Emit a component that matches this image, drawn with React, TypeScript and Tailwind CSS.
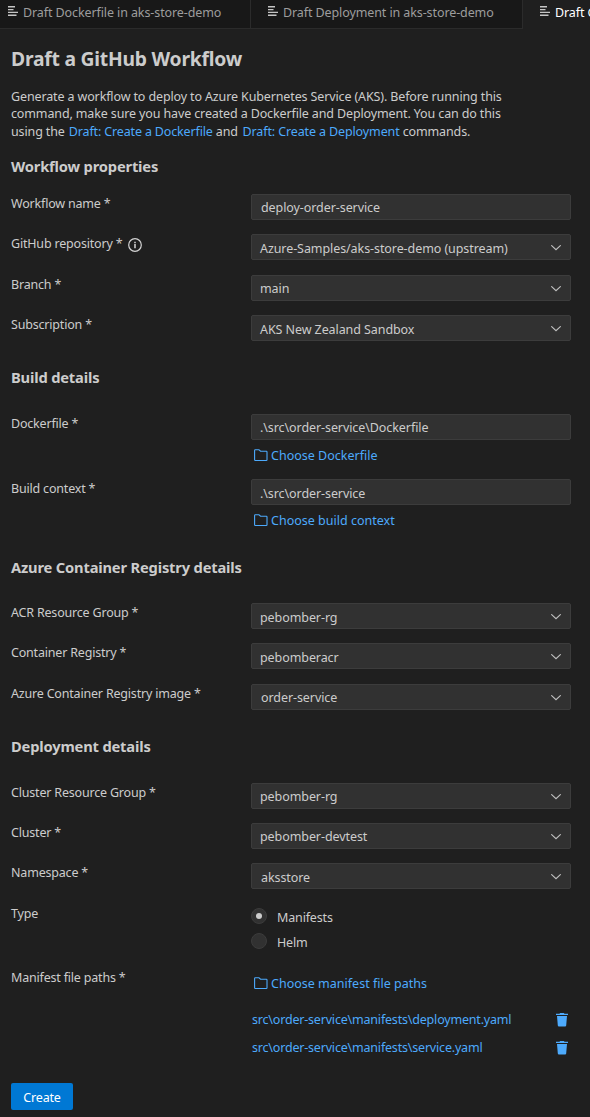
import type { ReactNode } from 'react'

function LinesIcon() {
  return (
    <svg width="10" height="11" viewBox="0 0 10 11" fill="none" stroke="#c5c5c5" strokeWidth="1.4" className="mt-[6px] shrink-0">
      <path d="M0 .7h7M0 3.6h5.5M0 6.4h10M0 9.3h8.5" />
    </svg>
  )
}

function FolderIcon() {
  return (
    <svg width="14" height="13" viewBox="0 0 14 13" fill="none" stroke="currentColor" strokeWidth="1.1" strokeLinejoin="round" className="mt-[2px] shrink-0">
      <path d="M1.3.7h3.3q.4 0 .7.3l1.4 1.3h5.6q.7 0 .7.7v7.8q0 .7-.7.7H1.3q-.7 0-.7-.7V1.4q0-.7.7-.7z" />
    </svg>
  )
}

function TrashIcon() {
  return (
    <svg width="12" height="14" viewBox="0 0 12 14" fill="currentColor" className="mt-[2px] shrink-0">
      <path d="M3.8 0h4.4v.7H12v1.4H0V.7h3.8zM1 3h10l-.8 9.4q-.1 1-1.1 1H2.9q-1 0-1.1-1z" />
    </svg>
  )
}

function InfoIcon() {
  return (
    <svg width="14" height="14" viewBox="0 0 14 14" fill="none" className="ml-[6px] mt-[3px] shrink-0">
      <circle cx="7" cy="7" r="6.3" stroke="#d4d4d4" strokeWidth="1.2" />
      <path d="M7 6v4.2" stroke="#e4e4e4" strokeWidth="1.4" />
      <path d="M7 3.8v1.4" stroke="#e4e4e4" strokeWidth="1.4" />
    </svg>
  )
}

function Chevron() {
  return (
    <svg width="10" height="6" viewBox="0 0 10 6" fill="none" stroke="#c0c0c0" strokeWidth="1.1" className="mr-[9px] mt-[10px] shrink-0">
      <path d="M.3.3 5 4.7 9.7.3" />
    </svg>
  )
}

function Tab({ title, className }: { title: string; className: string }) {
  return (
    <div className={`flex shrink-0 gap-[5px] overflow-hidden ${className}`}>
      <LinesIcon />
      <span className="pt-[4px]">{title}</span>
    </div>
  )
}

function Heading({ children, className }: { children: ReactNode; className: string }) {
  return <h2 className={`h-5 shrink-0 text-[14.7px] leading-5 font-bold tracking-[-0.17px] ${className}`}>{children}</h2>
}

function Row({ label, info, className = 'h-10', children }: { label: string; info?: boolean; className?: string; children: ReactNode }) {
  return (
    <div className={`flex shrink-0 ${className}`}>
      <div className="flex w-[240px] shrink-0 pt-px tracking-[-0.19px]">
        <span>{label}</span>
        {info && <InfoIcon />}
      </div>
      <div className="flex w-80 flex-col">{children}</div>
    </div>
  )
}

function Field({ value, select, className = 'pt-[4px]' }: { value: string; select?: boolean; className?: string }) {
  return (
    <div className="flex h-[26px] shrink-0 justify-between rounded-[2px] border border-[#3c3c3c] bg-[#313131]">
      <span className={`tracking-[-0.08px] ${className}`}>{value}</span>
      {select && <Chevron />}
    </div>
  )
}

function Choose({ children, className = 'mt-[7px]' }: { children: string; className?: string }) {
  return (
    <a className={`flex gap-[3px] pl-[3px] tracking-[0.01px] text-[#4daafc] ${className}`}>
      <FolderIcon />
      {children}
    </a>
  )
}

function Radio({ label, checked }: { label: string; checked?: boolean }) {
  return (
    <label className="flex h-[25px] gap-[10px]">
      <span className="flex size-4 items-center justify-center rounded-full border border-[#3c3c3c] bg-[#313131]">
        {checked && <span className="size-[6px] rounded-full bg-[#cccccc]" />}
      </span>
      <span className="pt-px">{label}</span>
    </label>
  )
}

function ManifestPath({ path }: { path: string }) {
  return (
    <div className="flex h-7 justify-between pr-[3px] pl-px tracking-[-0.19px] text-[#4daafc]">
      <a>{path}</a>
      <TrashIcon />
    </div>
  )
}

export default function App() {
  return (
    <div className="flex h-[1117px] w-[590px] flex-col overflow-hidden bg-[#1f1f1f] font-['Noto_Sans','Open_Sans',sans-serif] text-[12.5px] leading-[18px] tracking-[-0.15px] whitespace-nowrap text-[#cccccc]">
      <div className="flex h-[29px] shrink-0 tracking-[-0.1px]">
        <Tab title="Draft Dockerfile in aks-store-demo" className="w-[251px] border-r border-b border-[#2b2b2b] bg-[#181818] pl-[8px] text-[#9d9d9d]" />
        <Tab title="Draft Deployment in aks-store-demo" className="w-[272px] border-r border-b border-[#2b2b2b] bg-[#181818] pl-[17px] text-[#9d9d9d]" />
        <Tab title="Draft GitHub Workflow" className="w-[67px] pl-[17px] text-white" />
      </div>

      <main className="flex flex-col pl-[11px]">
        <h1 className="mt-[17px] h-[26px] text-[19.3px] leading-[26px] font-bold tracking-[-0.22px]">Draft a GitHub Workflow</h1>
        <p className="mt-[16px] flex h-[52px] flex-col tracking-[-0.13px]">
          <span className="h-[17px]">Generate a workflow to deploy to Azure Kubernetes Service (AKS). Before running this</span>
          <span className="h-[18px]">command, make sure you have created a Dockerfile and Deployment. You can do this</span>
          <span>
            using the <a className="pl-px tracking-[-0.15px] text-[#4daafc]">Draft: Create a Dockerfile</a> and{' '}
            <a className="pl-[1.5px] tracking-[-0.12px] text-[#4daafc]">Draft: Create a Deployment</a> commands.
          </span>
        </p>

        <Heading className="mt-[16px] mb-[18px]">Workflow properties</Heading>
        <Row label="Workflow name *"><Field value="deploy-order-service" className="pt-[4px] pl-[9px]" /></Row>
        <Row label="GitHub repository *" info className="h-[41px]"><Field select value="Azure-Samples/aks-store-demo (upstream)" className="pt-[5px] pl-[8px]" /></Row>
        <Row label="Branch *"><Field select value="main" className="pt-[4px] pl-[8px]" /></Row>
        <Row label="Subscription *" className="h-[26px]"><Field select value="AKS New Zealand Sandbox" className="pt-[5px] pl-[8px]" /></Row>

        <Heading className="mt-[26px] mb-[27px]">Build details</Heading>
        <Row label="Dockerfile *" className="h-[65px]">
          <Field value=".\src\order-service\Dockerfile" className="pt-[4px] pl-[8px]" />
          <Choose>Choose Dockerfile</Choose>
        </Row>
        <Row label="Build context *" className="h-[50px]">
          <Field value=".\src\order-service" className="pt-[5px] pl-[8px]" />
          <Choose>Choose build context</Choose>
        </Row>

        <Heading className="mt-[28px] mb-[26px]">Azure Container Registry details</Heading>
        <Row label="ACR Resource Group *"><Field select value="pebomber-rg" className="pt-[5px] pl-[8px]" /></Row>
        <Row label="Container Registry *" className="h-[41px]"><Field select value="pebomberacr" className="pt-[5px] pl-[8px]" /></Row>
        <Row label="Azure Container Registry image *" className="h-[26px]"><Field select value="order-service" className="pt-[4px] pl-[9px]" /></Row>

        <Heading className="mt-[26px] mb-[27px]">Deployment details</Heading>
        <Row label="Cluster Resource Group *"><Field select value="pebomber-rg" className="pt-[4px] pl-[8px]" /></Row>
        <Row label="Cluster *"><Field select value="pebomber-devtest" className="pt-[4px] pl-[8px]" /></Row>
        <Row label="Namespace *" className="h-[41px]"><Field select value="aksstore" className="pt-[5px] pl-[9px]" /></Row>
        <Row label="Type" className="h-[64px]">
          <div className="mt-[4px] flex flex-col">
            <Radio label="Manifests" checked />
            <Radio label="Helm" />
          </div>
        </Row>
        <Row label="Manifest file paths *" className="h-[115px]">
          <Choose className="mt-[7px] mb-[18px]">Choose manifest file paths</Choose>
          <ManifestPath path="src\order-service\manifests\deployment.yaml" />
          <ManifestPath path="src\order-service\manifests\service.yaml" />
        </Row>

        <button className="h-[27px] w-[62px] rounded-[2px] bg-[#0078d4] pt-[2px] text-white">Create</button>
      </main>
    </div>
  )
}
